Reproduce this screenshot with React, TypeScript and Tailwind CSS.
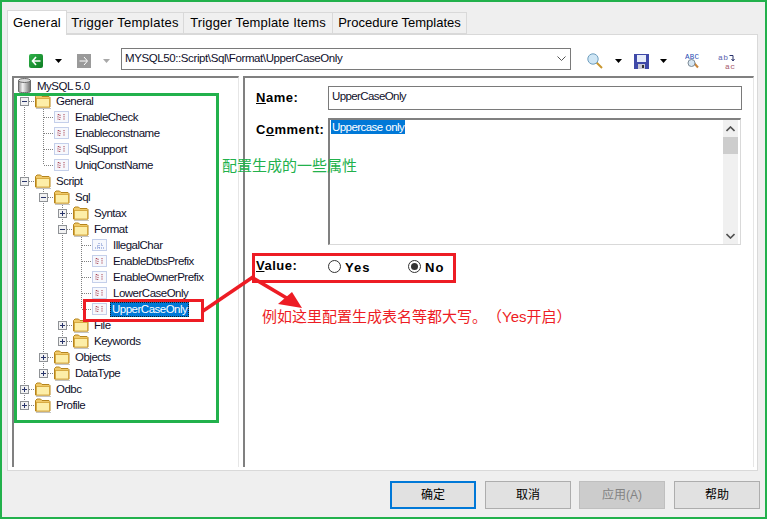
import React from 'react';

type Row = {
  label: string;
  depth: number;
  kind: 'open' | 'closed' | 'leaf';
  last?: boolean;
  blue?: boolean;
  selected?: boolean;
};

const rows: Row[] = [
  { label: 'General', depth: 0, kind: 'open' },
  { label: 'EnableCheck', depth: 1, kind: 'leaf' },
  { label: 'Enableconstname', depth: 1, kind: 'leaf' },
  { label: 'SqlSupport', depth: 1, kind: 'leaf' },
  { label: 'UniqConstName', depth: 1, kind: 'leaf', last: true },
  { label: 'Script', depth: 0, kind: 'open' },
  { label: 'Sql', depth: 1, kind: 'open' },
  { label: 'Syntax', depth: 2, kind: 'closed' },
  { label: 'Format', depth: 2, kind: 'open' },
  { label: 'IllegalChar', depth: 3, kind: 'leaf', blue: true },
  { label: 'EnableDtbsPrefix', depth: 3, kind: 'leaf' },
  { label: 'EnableOwnerPrefix', depth: 3, kind: 'leaf' },
  { label: 'LowerCaseOnly', depth: 3, kind: 'leaf' },
  { label: 'UpperCaseOnly', depth: 3, kind: 'leaf', last: true, selected: true },
  { label: 'File', depth: 2, kind: 'closed' },
  { label: 'Keywords', depth: 2, kind: 'closed', last: true },
  { label: 'Objects', depth: 1, kind: 'closed' },
  { label: 'DataType', depth: 1, kind: 'closed', last: true },
  { label: 'Odbc', depth: 0, kind: 'closed' },
  { label: 'Profile', depth: 0, kind: 'closed', last: true },
];

function Guide() {
  return (
    <svg width="19" height="16" className="shrink-0">
      <line x1="9.5" y1="0" x2="9.5" y2="16" stroke="#808080" strokeDasharray="1 1" />
    </svg>
  );
}

function Connector({ kind, last, first }: { kind: Row['kind']; last?: boolean; first?: boolean }) {
  return (
    <svg width="19" height="16" className="shrink-0">
      <line x1="9.5" y1={first ? 8 : 0} x2="9.5" y2={last ? 8 : 16} stroke="#808080" strokeDasharray="1 1" />
      <line x1="10" y1="8.5" x2="20" y2="8.5" stroke="#808080" strokeDasharray="1 1" />
      {kind !== 'leaf' && (
        <g>
          <rect x="5.5" y="4.5" width="8" height="8" fill="#f2f2f2" stroke="#8f9296" />
          <line x1="7" y1="8.5" x2="12" y2="8.5" stroke="#29356b" />
          {kind === 'closed' && <line x1="9.5" y1="6" x2="9.5" y2="11" stroke="#29356b" />}
        </g>
      )}
    </svg>
  );
}

function Folder() {
  return (
    <svg width="16" height="16" viewBox="0 0 16 16" className="ml-[1px] shrink-0">
      <path d="M0.5 14V3.5L2 2H5.5L7 3.5H14L15 4.5V14Z" fill="#f0c968" stroke="#b5841c" />
      <rect x="1.5" y="5.5" width="13" height="8.5" fill="#fdeea8" stroke="#d0a032" strokeWidth="0.8" />
      <line x1="1" y1="15.5" x2="16" y2="15.5" stroke="#c4c4c4" />
    </svg>
  );
}

function Leaf({ blue }: { blue?: boolean }) {
  const ink = blue ? '#6f86cc' : '#a84050';
  return (
    <svg width="16" height="14" viewBox="0 0 16 14" className="ml-[1px] shrink-0">
      <rect x="0.5" y="1.5" width="14" height="11" fill="#f6f8fd" stroke="#8fa3d6" strokeDasharray="1 1" />
      {blue ? (
        <path d="M5 8h1M7 5v5M9 6h1v3M3 10h9" stroke={ink} fill="none" strokeDasharray="1 1" />
      ) : (
        <path d="M4 4.5h2v5H4zM10 4v6" stroke={ink} fill="none" strokeDasharray="1.2 1" />
      )}
    </svg>
  );
}

function Cylinder() {
  return (
    <svg width="13" height="16" viewBox="0 0 13 16" className="shrink-0">
      <defs>
        <linearGradient id="cyl" x1="0" x2="1" y1="0" y2="0">
          <stop offset="0" stopColor="#8b8b8b" />
          <stop offset="0.35" stopColor="#f2f2f2" />
          <stop offset="1" stopColor="#6e6e6e" />
        </linearGradient>
      </defs>
      <path d="M0.5 2.5V13.5C0.5 15 12.5 15 12.5 13.5V2.5Z" fill="url(#cyl)" stroke="#6b6b6b" />
      <ellipse cx="6.5" cy="2.5" rx="6" ry="2" fill="#d9d9d9" stroke="#6b6b6b" />
    </svg>
  );
}

function TreeRow({ row }: { row: Row }) {
  return (
    <div className="flex h-4 items-center text-[11.5px] tracking-[-0.5px]">
      {Array.from({ length: row.depth }).map((_, i) => (
        <Guide key={i} />
      ))}
      <Connector kind={row.kind} last={row.last} first={row.label === 'General'} />
      <span className="flex">{row.kind === 'leaf' ? <Leaf blue={row.blue} /> : <Folder />}</span>
      <span
        className={
          row.selected
            ? 'ml-[2px] h-[15px] bg-[#0078d7] px-[2px] leading-[15px] text-white outline-1 -outline-offset-1 outline-[#1a1a1a] outline-dotted'
            : 'ml-[5px] leading-4 text-[#0f0f2a]'
        }
      >
        {row.label}
      </span>
    </div>
  );
}

function SmallArrow({ gray }: { gray?: boolean }) {
  return (
    <svg width="7" height="4" viewBox="0 0 7 4" className="shrink-0">
      <path d="M0 0H7L3.5 4Z" fill={gray ? '#a8a8a8' : '#000'} />
    </svg>
  );
}

function Radio({ checked, label }: { checked?: boolean; label: string }) {
  return (
    <span className="flex items-center">
      <span className="flex h-[13px] w-[13px] items-center justify-center rounded-full border border-[#333] bg-white">
        {checked && <span className="h-[7px] w-[7px] rounded-full bg-[#333]" />}
      </span>
      <span className="ml-[4px] mt-[2px] text-[13px] font-bold tracking-[0.08em] text-black">{label}</span>
    </span>
  );
}

function Label({ first, rest, head = '' }: { first: string; rest: string; head?: string }) {
  return (
    <span className="w-[72px] shrink-0 text-[13px] font-bold tracking-[0.04em] text-black">
      {head}
      <span className="underline">{first}</span>
      {rest}
    </span>
  );
}

const tabs = [
  { label: 'Trigger Templates', cls: 'w-[117px] tracking-[0.02em]' },
  { label: 'Trigger Template Items', cls: 'w-[149px] tracking-[0.012em]' },
  { label: 'Procedure Templates', cls: 'w-[134px] tracking-[0em]' },
];

export default function App() {
  return (
    <div
      className="relative flex h-[519px] w-[767px] flex-col overflow-hidden border-2 border-[#22b14c] bg-[#efefef] text-xs text-black"
      style={{ fontFamily: '"Liberation Sans", "Noto Sans CJK SC", sans-serif' }}
    >
      {/* tabs */}
      <div className="ml-[5px] mt-[7px] flex h-[25px] items-end">
        <div className="z-10 -mb-[1px] flex h-[25px] w-[60px] items-center justify-center border border-b-0 border-[#d9d9d9] bg-white pb-[1px] text-[13px] tracking-[0.02em]">
          General
        </div>
        {tabs.map((t) => (
          <div
            key={t.label}
            className={`flex h-[22px] ${t.cls} items-center justify-center border border-l-0 border-[#d9d9d9] bg-[#f0f0f0] text-[13px]`}
          >
            {t.label}
          </div>
        ))}
      </div>

      {/* panel */}
      <div className="ml-[5px] flex h-[437px] w-[751px] flex-col border border-[#d9d9d9] bg-white">
        <div className="flex h-[41px] shrink-0 items-start pt-[13px]">
          <div className="ml-[21px] mt-[6px] flex h-[14px] w-[14px] items-center justify-center rounded-[2px] bg-gradient-to-br from-[#2fb24a] to-[#0c7d22]">
            <svg width="10" height="10" viewBox="0 0 10 10">
              <path d="M5 1L1.5 5L5 9M2 5H9.5" stroke="#fff" strokeWidth="1.6" fill="none" />
            </svg>
          </div>
          <span className="ml-[12px] mt-[11px] flex"><SmallArrow /></span>
          <div className="ml-[15px] mt-[6px] flex h-[14px] w-[14px] items-center justify-center bg-[#9a9a9a]">
            <svg width="10" height="10" viewBox="0 0 10 10">
              <path d="M5 1L8.5 5L5 9M8 5H0.5" stroke="#fff" strokeWidth="1" fill="none" />
            </svg>
          </div>
          <span className="ml-[12px] mt-[11px] flex"><SmallArrow gray /></span>
          <div className="ml-[11px] flex h-[22px] w-[450px] items-center justify-between border border-[#7a7a7a] bg-white pl-[3px] pr-[4px] text-[11.5px] tracking-[-0.4px] text-[#0f0f2a]">
            <span>MYSQL50::Script\Sql\Format\UpperCaseOnly</span>
            <svg width="9" height="6" viewBox="0 0 9 6">
              <path d="M0.5 0.5L4.5 4.5L8.5 0.5" stroke="#555" fill="none" />
            </svg>
          </div>
          <svg width="16" height="16" viewBox="0 0 16 16" className="ml-[16px] mt-[5px] shrink-0">
            <line x1="9.5" y1="9.5" x2="15" y2="15" stroke="#c9962f" strokeWidth="2" />
            <circle cx="6" cy="6" r="5.2" fill="#cfe6f5" stroke="#6f9fbf" />
          </svg>
          <span className="ml-[12px] mt-[11px] flex"><SmallArrow /></span>
          <svg width="15" height="15" viewBox="0 0 15 15" className="ml-[12px] mt-[6px] shrink-0">
            <rect width="15" height="15" fill="#3f49a8" />
            <rect x="3" y="1" width="9" height="7" fill="#e6ecfa" />
            <rect x="4" y="10" width="7" height="5" fill="#c9c9d6" />
            <rect x="8" y="11" width="2" height="3" fill="#333" />
          </svg>
          <span className="ml-[11px] mt-[11px] flex"><SmallArrow /></span>
          <svg width="16" height="17" viewBox="0 0 16 17" className="ml-[18px] mt-[4px] shrink-0">
            <text x="0" y="7" fontSize="7.5" fill="#2b4fb5" fontFamily="Liberation Mono, monospace" textLength="14">ABC</text>
            <line x1="9" y1="11" x2="13" y2="15.5" stroke="#c9843a" strokeWidth="2" />
            <circle cx="6.5" cy="11" r="3.5" fill="#d7e6f2" stroke="#7c8a96" />
          </svg>
          <svg width="18" height="20" viewBox="0 0 18 20" className="ml-[17px] mt-[4px] shrink-0">
            <text x="0" y="7.5" fontSize="8" fill="#5b5fae" fontFamily="Liberation Mono, monospace" textLength="10">ab</text>
            <path d="M11.5 3.5H15V8M13.5 7L15 9L16.5 7" stroke="#27306b" fill="none" />
            <text x="7" y="16.5" fontSize="8" fill="#a8606f" fontFamily="Liberation Mono, monospace" textLength="10">ac</text>
          </svg>
        </div>

        <div className="flex min-h-0 flex-1 pb-[3px] pl-[4px]">
          {/* tree */}
          <div className="w-[227px] shrink-0 border-l-2 border-r border-t-2 border-[#808080] border-r-[#e6e6e6] pl-[1px]">
            <div className="flex h-[15px] items-center pl-[3px] text-[11.5px] tracking-[-0.5px]">
              <Cylinder />
              <span className="ml-[6px] leading-4 text-[#0f0f2a]">MySQL 5.0</span>
            </div>
            {rows.map((r) => (
              <TreeRow key={r.label} row={r} />
            ))}
          </div>

          {/* details */}
          <div className="ml-[4px] w-[511px] border-l-2 border-r border-t-2 border-[#808080] border-r-[#e6e6e6] pl-[11px]">
            <div className="mt-[8px] flex items-center">
              <Label first="N" rest="ame:" />
              <div className="flex h-[24px] w-[414px] items-start border border-[#7a7a7a] pl-[3px] pt-[2px] text-[11.5px] tracking-[-0.6px] text-[#0f0f2a]">
                UpperCaseOnly
              </div>
            </div>
            <div className="mt-[8px] flex items-start">
              <div className="mt-[3px] flex">
                <Label head="C" first="o" rest="mment:" />
              </div>
              <div className="flex h-[127px] w-[413px] justify-between border-b border-l-2 border-r border-t-2 border-[#808080] border-b-[#d9d9d9] border-r-[#d9d9d9] pl-[1px]">
                <span className="h-[14px] bg-[#0078d7] px-[1px] text-[11.5px] leading-[14px] tracking-[-0.55px] text-white">Uppercase only</span>
                <div className="mr-[2px] flex w-[15px] flex-col items-center justify-between bg-[#f0f0f0]">
                  <div className="flex w-full flex-col">
                    <div className="flex h-[17px] items-center justify-center">
                      <svg width="9" height="6" viewBox="0 0 9 6">
                        <path d="M0.5 5L4.5 1L8.5 5" stroke="#505050" strokeWidth="1.6" fill="none" />
                      </svg>
                    </div>
                    <div className="h-[17px] w-full bg-[#cdcdcd]" />
                  </div>
                  <div className="flex h-[17px] items-center justify-center">
                    <svg width="9" height="6" viewBox="0 0 9 6">
                      <path d="M0.5 1L4.5 5L8.5 1" stroke="#505050" strokeWidth="1.6" fill="none" />
                    </svg>
                  </div>
                </div>
              </div>
            </div>
            <div className="mt-[12px] flex items-start">
              <Label first="V" rest="alue:" />
              <div className="flex w-[80px]"><Radio label="Yes" /></div>
              <Radio checked label="No" />
            </div>
          </div>
        </div>
      </div>

      {/* buttons */}
      <div className="mt-[10px] flex justify-end gap-[9px] pr-[5px]">
        <button className="h-[28px] w-[86px] border-2 border-[#0078d7] bg-[#e1e1e1] text-xs">确定</button>
        <button className="h-[28px] w-[86px] border border-[#adadad] bg-[#e1e1e1] text-xs">取消</button>
        <button className="-ml-[1px] h-[28px] w-[86px] border border-[#bfbfbf] bg-[#cccccc] text-xs text-[#838383]">应用(A)</button>
        <button className="h-[28px] w-[86px] border border-[#adadad] bg-[#e1e1e1] text-xs">帮助</button>
      </div>

      {/* annotations */}
      <div className="absolute left-[12px] top-[91px] h-[330px] w-[205px] border-[3px] border-[#22b14c]" />
      <div className="absolute left-[220px] top-[154px] text-[15px] leading-5 text-[#22b14c]">配置生成的一些属性</div>
      <div className="absolute left-[250px] top-[251px] h-[30px] w-[204px] border-[3px] border-[#ed1c24]" />
      <div className="absolute left-[81px] top-[297px] h-[23px] w-[121px] border-[3px] border-[#ed1c24]" />
      <svg width="767" height="519" className="pointer-events-none absolute -left-[2px] -top-[2px]">
        <line x1="203" y1="311" x2="253" y2="277" stroke="#ed1c24" strokeWidth="3.5" />
        <line x1="253" y1="278" x2="290" y2="300" stroke="#ed1c24" strokeWidth="3.5" />
        <path d="M302 308L278 304L292 292Z" fill="#ed1c24" />
      </svg>
      <div className="absolute left-[260px] top-[305px] text-[15px] leading-5 text-[#ed1c24] [text-spacing-trim:space-all]">例如这里配置生成表名等都大写。（Yes开启）</div>
    </div>
  );
}
